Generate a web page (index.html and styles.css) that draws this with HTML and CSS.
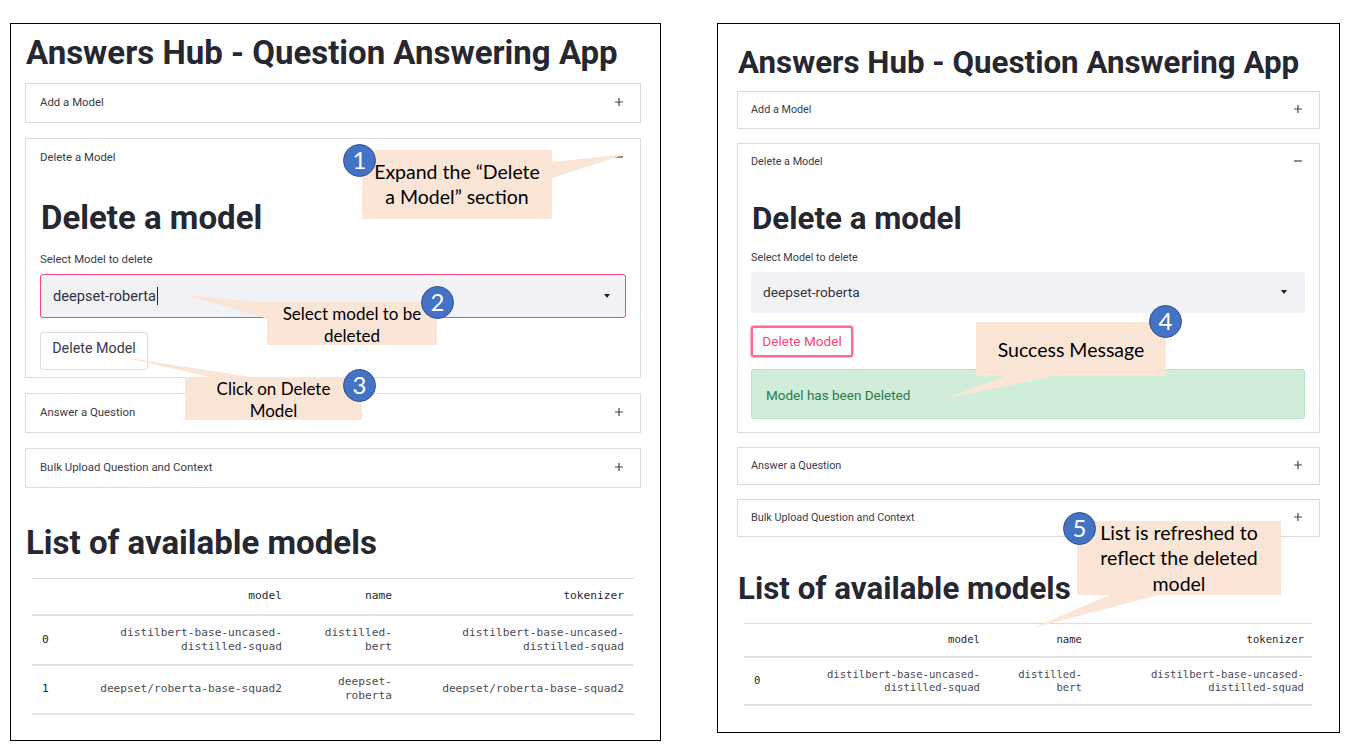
FILE: index.html
```html
<!DOCTYPE html>
<html>
<head>
    <title>Answers Hub - Delete a Model</title>
    <meta charset="utf-8" />
    <link rel="stylesheet" href="styles.css">
</head>
<body>
    <div class="page">
        <!-- before: expanding the section and picking a model -->
        <section class="panel panel-before">
            <h1 class="title">Answers Hub - Question Answering App</h1>
            <div class="item">
                <div class="item-head"><span>Add a Model</span><svg class="toggle" viewBox="0 0 10 10"><path d="M1 5H9M5 1V9"/></svg></div>
            </div>
            <div class="item">
                <div class="item-head"><span>Delete a Model</span><svg class="toggle" viewBox="0 0 10 10"><path d="M1 5H9"/></svg></div>
                <div class="item-body">
                    <h2 class="heading">Delete a model</h2>
                    <div class="field-label">Select Model to delete</div>
                    <div class="select select-focus"><span class="select-value">deepset-roberta</span><span class="arrow"></span></div>
                    <button class="btn">Delete Model</button>
                </div>
            </div>
            <div class="item">
                <div class="item-head"><span>Answer a Question</span><svg class="toggle" viewBox="0 0 10 10"><path d="M1 5H9M5 1V9"/></svg></div>
            </div>
            <div class="item">
                <div class="item-head"><span>Bulk Upload Question and Context</span><svg class="toggle" viewBox="0 0 10 10"><path d="M1 5H9M5 1V9"/></svg></div>
            </div>
            <h2 class="heading list-heading">List of available models</h2>
            <table class="models">
                <colgroup><col class="col-index"><col class="col-model"><col class="col-name"><col class="col-tok"></colgroup>
                <tr><th></th><th>model</th><th>name</th><th>tokenizer</th></tr>
                <tr><th>0</th><td>distilbert-base-uncased-<br>distilled-squad</td><td>distilled-<br>bert</td><td>distilbert-base-uncased-<br>distilled-squad</td></tr>
                <tr><th>1</th><td>deepset/roberta-base-squad2</td><td>deepset-<br>roberta</td><td>deepset/roberta-base-squad2</td></tr>
            </table>
        </section>

        <!-- after: the model is gone -->
        <section class="panel panel-after">
            <h1 class="title">Answers Hub - Question Answering App</h1>
            <div class="item">
                <div class="item-head"><span>Add a Model</span><svg class="toggle" viewBox="0 0 10 10"><path d="M1 5H9M5 1V9"/></svg></div>
            </div>
            <div class="item">
                <div class="item-head"><span>Delete a Model</span><svg class="toggle" viewBox="0 0 10 10"><path d="M1 5H9"/></svg></div>
                <div class="item-body">
                    <h2 class="heading">Delete a model</h2>
                    <div class="field-label">Select Model to delete</div>
                    <div class="select"><span class="select-value">deepset-roberta</span><span class="arrow"></span></div>
                    <button class="btn btn-active">Delete Model</button>
                    <div class="success">Model has been Deleted</div>
                </div>
            </div>
            <div class="item">
                <div class="item-head"><span>Answer a Question</span><svg class="toggle" viewBox="0 0 10 10"><path d="M1 5H9M5 1V9"/></svg></div>
            </div>
            <div class="item">
                <div class="item-head"><span>Bulk Upload Question and Context</span><svg class="toggle" viewBox="0 0 10 10"><path d="M1 5H9M5 1V9"/></svg></div>
            </div>
            <h2 class="heading list-heading">List of available models</h2>
            <table class="models">
                <colgroup><col class="col-index"><col class="col-model"><col class="col-name"><col class="col-tok"></colgroup>
                <tr><th></th><th>model</th><th>name</th><th>tokenizer</th></tr>
                <tr><th>0</th><td>distilbert-base-uncased-<br>distilled-squad</td><td>distilled-<br>bert</td><td>distilbert-base-uncased-<br>distilled-squad</td></tr>
            </table>
        </section>

        <!-- callout tails -->
        <svg class="tails" viewBox="0 0 1351 749">
            <polygon points="626,154 552,162 552,178"/>
            <polygon points="187,295 268,303 268,319"/>
            <polygon points="122,357 214,378 257,378"/>
            <polygon points="944,399 1008,375 1058,375"/>
            <polygon points="1033,628 1112,594 1162,594"/>
        </svg>

        <div class="note note-1">Expand the “Delete<br>a Model” section</div>
        <div class="note note-2">Select model to be<br>deleted</div>
        <div class="note note-3">Click on Delete<br>Model</div>
        <div class="note note-4">Success Message</div>
        <div class="note note-5">List is refreshed to<br>reflect the deleted<br>model</div>

        <div class="step step-1">1</div>
        <div class="step step-2">2</div>
        <div class="step step-3">3</div>
        <div class="step step-4">4</div>
        <div class="step step-5">5</div>
    </div>
</body>
</html>
```
FILE: styles.css
```css
* {
    box-sizing: border-box;
}

body {
    margin: 0;
    background-color: white;
    color: #262730;
    font-family: "Roboto", sans-serif;
}

.page {
    position: relative;
    width: 1351px;
    height: 749px;
    overflow: hidden;
    display: flex;
    align-items: flex-start;
    gap: 56px;
    padding: 23px 0 0 10px;
}

.panel {
    border: 1px solid black;
    background-color: white;
}

.panel-before {
    width: 651px;
    height: 718px;
    padding: 9px 19px 0 14px;
}

.panel-after {
    width: 623px;
    height: 710px;
    padding: 19px 19px 0 19px;
}

.title,
.heading {
    margin: 0;
    padding-left: 1px;
    font-weight: 700;
    line-height: 40px;
    white-space: nowrap;
}

.title {
    font-size: 33px;
}

.panel-before .title {
    margin-bottom: 10px;
}

.panel-after .title {
    margin-bottom: 8px;
    font-size: 31.3px;
}

/* accordion */
.item {
    border: 1px solid #dcdcdc;
}

.panel-before .item {
    margin-bottom: 15px;
}

.panel-after .item {
    margin-bottom: 14px;
}

.item-head {
    display: flex;
    justify-content: space-between;
    align-items: center;
    padding-bottom: 2px;
    font-size: 11.4px;
    color: #3a3b47;
}

.panel-before .item-head {
    height: 38px;
    padding-left: 14px;
    padding-right: 16px;
}

.panel-after .item-head {
    height: 36px;
    padding-left: 13px;
    padding-right: 16px;
    font-size: 10.8px;
}

.toggle {
    width: 10px;
    height: 10px;
    fill: none;
    stroke: #444;
    stroke-width: 1.2;
}

.item-body {
    padding: 0 14px;
}

.panel-before .item-body {
    padding-bottom: 7px;
}

.panel-after .item-body {
    padding: 0 14px 13px 13px;
}

.item-body .heading {
    font-size: 33px;
}

.panel-before .item-body .heading {
    margin-top: 21px;
}

.panel-after .item-body .heading {
    margin-top: 19px;
    font-size: 31.3px;
}

.field-label {
    font-size: 11.4px;
    line-height: 14px;
    color: #3a3b47;
}

.panel-before .field-label {
    margin-top: 14px;
}

.panel-after .field-label {
    margin-top: 12px;
    font-size: 10.8px;
}

.select {
    display: flex;
    justify-content: space-between;
    align-items: center;
    background-color: #f0f2f6;
    border-radius: 3px;
    color: #31333f;
}

.panel-before .select {
    height: 44px;
    margin-top: 8px;
    padding: 0 15px 0 12px;
    font-size: 14.6px;
}

.panel-after .select {
    height: 41px;
    margin-top: 7px;
    padding: 0 18px 2px 12px;
    font-size: 13.7px;
}

.select-focus {
    border: 1px solid #f8447c;
}

.select-focus .select-value {
    border-right: 1px solid #222;
    padding-right: 1px;
}

.arrow {
    width: 0;
    height: 0;
    border-left: 3.5px solid transparent;
    border-right: 3.5px solid transparent;
    border-top: 4px solid #222;
}

.btn {
    display: block;
    padding: 0;
    background-color: white;
    border: 1px solid #dddddd;
    border-radius: 3px;
    font-family: "Roboto", sans-serif;
    color: #3a3b47;
}

.panel-before .btn {
    width: 108px;
    height: 38px;
    margin-top: 14px;
    padding-bottom: 7px;
    font-size: 14.3px;
}

.panel-after .btn {
    width: 102px;
    height: 31px;
    margin-top: 13px;
    padding-bottom: 2px;
    font-size: 13.6px;
}

.btn-active {
    border: 2px solid #ff6a8e;
    box-shadow: 0 0 0 1px #ffb3c4;
    color: #f8447c;
}

.success {
    height: 50px;
    margin-top: 12px;
    padding: 17px 0 0 14px;
    background-color: #d0edd9;
    border: 1px solid #b9e3c6;
    border-radius: 3px;
    font-size: 13.5px;
    line-height: 16px;
    color: #2b7a4f;
}

/* models table */
.list-heading {
    font-size: 33px;
}

.panel-before .list-heading {
    margin-top: 35px;
}

.panel-after .list-heading {
    margin-top: 32px;
    font-size: 31.3px;
}

.models {
    table-layout: fixed;
    border-collapse: collapse;
    margin-left: 7px;
    font-family: "DejaVu Sans Mono", monospace;
    color: #4a4b55;
    border-top: 1px solid #dcdcdc;
}

.models th,
.models td {
    font-weight: 400;
    text-align: right;
    border-bottom: 2px solid #e4e4e4;
}

.models th {
    color: #262730;
}

.models th:first-child {
    text-align: left;
}

.panel-before .models {
    width: 602px;
    margin-top: 15px;
    font-size: 11.2px;
    line-height: 14px;
}

.panel-after .models {
    width: 568px;
    margin-top: 14px;
    font-size: 10.6px;
    line-height: 13px;
}

.panel-before .models th,
.panel-before .models td {
    height: 50px;
    padding: 0 10px;
}

.panel-before .models tr:first-child th {
    height: 36px;
}

.panel-before .models tr:last-child th,
.panel-before .models tr:last-child td {
    height: 49px;
}

.panel-after .models th,
.panel-after .models td {
    height: 48px;
    padding: 0 8px 0 10px;
}

.panel-after .models tr:first-child th {
    height: 33px;
}

.panel-before .col-index { width: 50px; }
.panel-before .col-model { width: 210px; }
.panel-before .col-name { width: 110px; }
.panel-before .col-tok { width: 232px; }

.panel-after .col-index { width: 50px; }
.panel-after .col-model { width: 194px; }
.panel-after .col-name { width: 102px; }
.panel-after .col-tok { width: 222px; }

/* annotations laid over the screenshots */
.tails {
    position: absolute;
    left: 0;
    top: 0;
    width: 1351px;
    height: 749px;
    fill: #fbe5d6;
}

.note {
    position: absolute;
    display: flex;
    align-items: center;
    justify-content: center;
    text-align: center;
    background-color: #fbe5d6;
    color: black;
    font-family: "Lato", sans-serif;
    font-size: 19.5px;
    line-height: 25px;
}

.note-1 { left: 362px; top: 150px; width: 190px; height: 69px; padding-bottom: 2px; }
.note-2 { left: 267px; top: 302px; width: 170px; height: 43px; padding-top: 2px; font-size: 17px; line-height: 22px; }
.note-3 { left: 185px; top: 377px; width: 177px; height: 43px; padding-top: 2px; font-size: 17px; line-height: 22px; }
.note-4 { left: 976px; top: 322px; width: 190px; height: 54px; }
.note-5 { left: 1077px; top: 521px; width: 204px; height: 74px; line-height: 25.5px; }

.step {
    position: absolute;
    width: 33px;
    height: 33px;
    border-radius: 50%;
    background-color: #4472c4;
    border: 1px solid #2f528f;
    color: white;
    font-family: "Lato", sans-serif;
    font-size: 24px;
    line-height: 30px;
    text-align: center;
}

.step-1 { left: 343px; top: 144px; }
.step-2 { left: 421px; top: 286px; }
.step-3 { left: 343px; top: 369px; }
.step-4 { left: 1149px; top: 305px; }
.step-5 { left: 1063px; top: 512px; }
```
